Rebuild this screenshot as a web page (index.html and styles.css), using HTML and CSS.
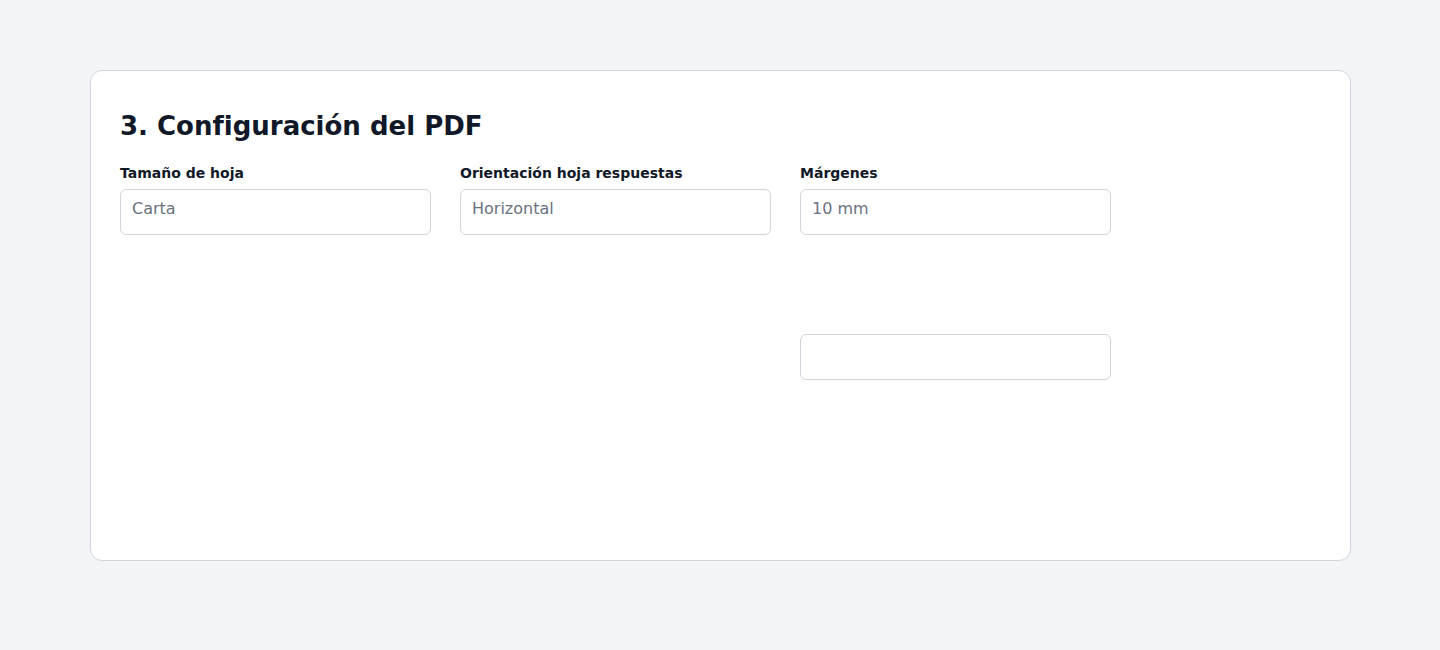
FILE: index.html
```html
<!DOCTYPE html>
<html lang="es">
<head>
<meta charset="utf-8">
<title>Configuración del PDF</title>
<link rel="stylesheet" href="styles.css">
</head>
<body>
<main class="page">
  <section class="card">
    <h2 class="title">3. Configuración del PDF</h2>
    <div class="grid">
      <div class="field">
        <label class="label">Tamaño de hoja</label>
        <div class="input"><span class="placeholder">Carta</span></div>
      </div>
      <div class="field">
        <label class="label">Orientación hoja respuestas</label>
        <div class="input"><span class="placeholder">Horizontal</span></div>
      </div>
      <div class="field">
        <label class="label">Márgenes</label>
        <div class="input"><span class="placeholder">10 mm</span></div>
        <div class="input extra"></div>
      </div>
    </div>
  </section>
</main>
</body>
</html>
```

FILE: styles.css
```css
* { box-sizing: border-box; }
html, body {
  margin: 0;
  padding: 0;
  background: #f3f4f6;
  font-family: "DejaVu Sans", Verdana, sans-serif;
  color: #111827;
}
.page {
  padding: 70px 89px 89px 90px;
}
.card {
  background: #ffffff;
  border: 1px solid #d1d5db;
  border-radius: 12px;
  height: 491px;
  padding: 29px 29px;
}
.title {
  margin: 0 0 12px 0;
  font-size: 26px;
  line-height: 52px;
  font-weight: bold;
  color: #111827;
}
.grid {
  display: grid;
  grid-template-columns: repeat(3, 311px);
  column-gap: 29px;
}
.field {
  display: flex;
  flex-direction: column;
}
.label {
  font-size: 14px;
  font-weight: bold;
  line-height: 18px;
  margin-bottom: 7px;
  color: #111827;
}
.input {
  height: 46px;
  border: 1px solid #d1d5db;
  border-radius: 6px;
  padding: 9px 11px;
  font-size: 16px;
  line-height: 19px;
}
.placeholder { color: #6b7280; }
.extra { margin-top: 99px; }
```
